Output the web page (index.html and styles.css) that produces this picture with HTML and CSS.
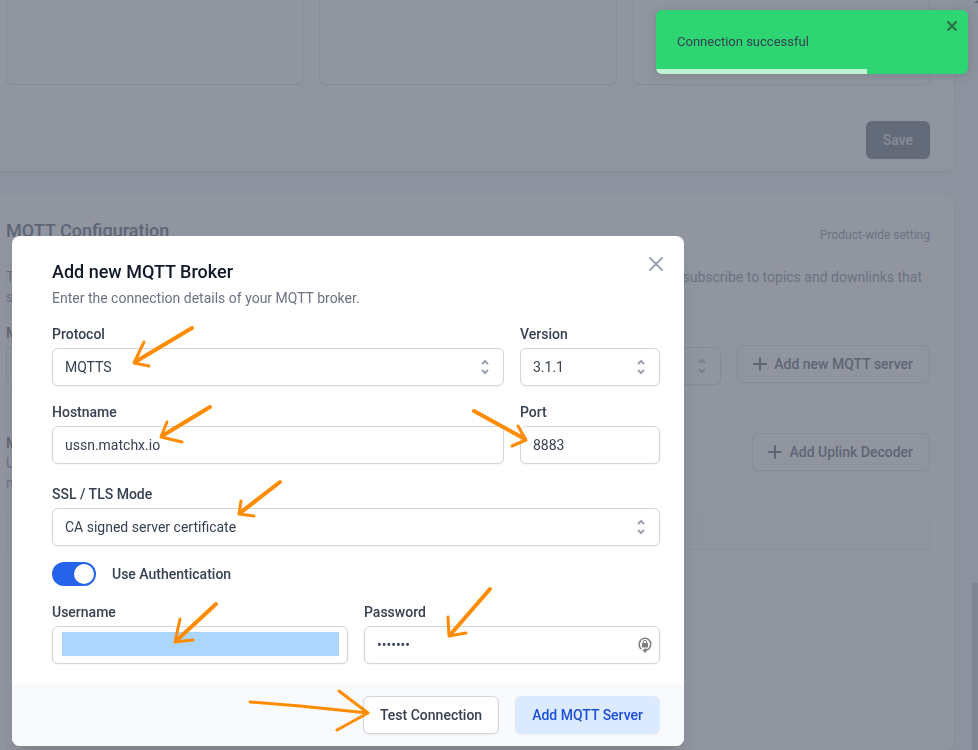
FILE: index.html
```html
<!DOCTYPE html>
<html lang="en">
<head>
  <meta charset="utf-8">
  <title>Add new MQTT Broker</title>
  <link rel="stylesheet" href="styles.css">
</head>
<body>
  <main class="page">
    <section class="card card-first">
      <div class="tiles">
        <div class="tile"></div>
        <div class="tile"></div>
        <div class="tile"></div>
      </div>
      <div class="card-footer">
        <button class="btn btn-save" type="button">Save</button>
      </div>
    </section>

    <section class="card card-config">
      <header class="config-head">
        <h2 class="heading">MQTT Configuration</h2>
        <span class="scope">Product-wide setting</span>
      </header>
      <div class="intro">
        <p>T<br>s</p>
        <p>subscribe to topics and downlinks that</p>
      </div>
      <div class="server-row">
        <div class="server-field">
          <label class="label" for="server">M</label>
          <div class="select-wrap">
            <select class="control" id="server"></select>
            <svg class="chevrons" viewBox="0 0 20 20"><path d="M7 7l3-3 3 3m0 6l-3 3-3-3"/></svg>
          </div>
        </div>
        <button class="btn btn-outline btn-icon" type="button">
          <svg class="plus" viewBox="0 0 20 20"><path d="M10 4v12M4 10h12"/></svg>
          Add new MQTT server
        </button>
      </div>
      <div class="decoder-row">
        <div class="decoder-text">
          <h3 class="label">M</h3>
          <p>U<br>n</p>
        </div>
        <button class="btn btn-outline btn-icon" type="button">
          <svg class="plus" viewBox="0 0 20 20"><path d="M10 4v12M4 10h12"/></svg>
          Add Uplink Decoder
        </button>
      </div>
      <div class="decoder-panel"><div class="decoder-panel-head"></div></div>
    </section>
  </main>

  <div class="scrollbar"><div class="scroll-arrow"></div><div class="scroll-thumb"></div></div>

  <div class="backdrop">
    <form class="modal" role="dialog" aria-labelledby="dialog-title">
      <div class="modal-body">
        <header class="modal-head">
          <div>
            <h1 class="modal-title" id="dialog-title">Add new MQTT Broker</h1>
            <p class="modal-sub">Enter the connection details of your MQTT broker.</p>
          </div>
          <button class="close" type="button" aria-label="Close">
            <svg viewBox="0 0 24 24"><path d="M6 18L18 6M6 6l12 12"/></svg>
          </button>
        </header>

        <div class="fields">
          <div class="field wide">
            <label class="label" for="protocol">Protocol</label>
            <div class="select-wrap">
              <select class="control" id="protocol"><option>MQTTS</option></select>
              <svg class="chevrons" viewBox="0 0 20 20"><path d="M7 7l3-3 3 3m0 6l-3 3-3-3"/></svg>
            </div>
          </div>
          <div class="field">
            <label class="label" for="version">Version</label>
            <div class="select-wrap">
              <select class="control" id="version"><option>3.1.1</option></select>
              <svg class="chevrons" viewBox="0 0 20 20"><path d="M7 7l3-3 3 3m0 6l-3 3-3-3"/></svg>
            </div>
          </div>
          <div class="field wide">
            <label class="label" for="hostname">Hostname</label>
            <input class="control" id="hostname" type="text" value="ussn.matchx.io">
          </div>
          <div class="field">
            <label class="label" for="port">Port</label>
            <input class="control" id="port" type="text" value="8883">
          </div>
        </div>

        <div class="field tls">
          <label class="label" for="tls">SSL / TLS Mode</label>
          <div class="select-wrap">
            <select class="control" id="tls"><option>CA signed server certificate</option></select>
            <svg class="chevrons" viewBox="0 0 20 20"><path d="M7 7l3-3 3 3m0 6l-3 3-3-3"/></svg>
          </div>
        </div>

        <div class="auth">
          <input class="toggle" id="auth" type="checkbox" role="switch" checked>
          <label class="auth-label" for="auth">Use Authentication</label>
        </div>

        <div class="fields credentials">
          <div class="field half">
            <label class="label" for="username">Username</label>
            <input class="control masked" id="username" type="text">
          </div>
          <div class="field half">
            <label class="label" for="password">Password</label>
            <div class="select-wrap">
              <input class="control" id="password" type="password" value="1234567">
              <svg class="lock" viewBox="0 0 16 18">
                <path class="ring" d="M4.300 13.200A5.800 6.200 0 1 1 12 12.800L8.500 14.500"/>
                <path d="M9.200 11.800v5.400L5.200 14.500z"/>
                <rect x="5" y="7" width="6" height="4.500" rx=".5"/>
                <path class="shackle" d="M6.300 7.500V6a1.700 1.700 0 0 1 3.400 0v1.500"/>
              </svg>
            </div>
          </div>
        </div>
      </div>
      <footer class="modal-footer">
        <button class="btn btn-outline" type="button">Test Connection</button>
        <button class="btn btn-primary" type="submit">Add MQTT Server</button>
      </footer>
    </form>
  </div>

  <div class="toast" role="status">
    <p>Connection successful</p>
    <button class="toast-close" type="button" aria-label="Dismiss">
      <svg viewBox="0 0 14 16"><path d="M2.500 3.500l9 9M11.500 3.500l-9 9"/></svg>
    </button>
    <div class="toast-progress"></div>
  </div>

  <svg class="arrows" width="978" height="750" viewBox="0 0 978 750" aria-hidden="true">
    <g class="shafts">
      <path d="M192 328L135 362"/>
      <path d="M210 407L162 436"/>
      <path d="M474 411L525 439"/>
      <path d="M280 482L240 513"/>
      <path d="M216 604L176 641"/>
      <path d="M490 589L450 635"/>
    </g>
    <path d="M144 342L134 363L149 366"/>
    <path d="M167 422L161 437L182 442"/>
    <path d="M518 426L526 440L512 446"/>
    <path d="M241 501L239 514L254 516"/>
    <path d="M180 619L175 642L193 640"/>
    <path d="M448 617L449 636L466 633"/>
    <path d="M250 702L300 706L368 713M339 691L368 713L337 730"/>
  </svg>
</body>
</html>
```
FILE: styles.css
```css
*, *::before, *::after { box-sizing: border-box; }

body {
  margin: 0;
  height: 100vh;
  overflow: hidden;
  display: flex;
  background: #f3f4f6;
  color: #374151;
  font: 14px/20px Roboto, "Liberation Sans", sans-serif;
}

h1, h2, h3, p { margin: 0; font-weight: 400; }
button, input, select { font: inherit; color: inherit; }
svg { fill: none; stroke: currentColor; display: block; }

.page {
  flex: 1;
  display: flex;
  flex-direction: column;
  gap: 24px;
  padding-right: 24px;
}

.card {
  background: #fff;
  border-radius: 0 8px 8px 0;
  box-shadow: 0 1px 3px rgba(0, 0, 0, .1), 0 1px 2px rgba(0, 0, 0, .06);
}

.tiles {
  display: grid;
  grid-template-columns: repeat(3, 1fr);
  gap: 16px;
  padding: 0 24px 24px 6px;
}

.tile {
  height: 85px;
  border: 1px solid #d1d5db;
  border-top: 0;
  border-radius: 0 0 6px 6px;
}

.card-footer {
  display: flex;
  justify-content: flex-end;
  padding: 12px 24px;
  background: #f9fafb;
  border-radius: 0 0 8px;
}

.btn {
  display: flex;
  align-items: center;
  justify-content: center;
  height: 38px;
  padding: 0 16px;
  border: 1px solid transparent;
  border-radius: 6px;
  font-weight: 500;
  white-space: nowrap;
  box-shadow: 0 1px 2px rgba(0, 0, 0, .05);
}

.btn-save { background: #4b5563; color: #d1d5db; }
.btn-outline { background: #fff; border-color: #d1d5db; }
.btn-primary { background: #dbeafe; color: #1d4ed8; }
.btn-icon { gap: 4px; padding-left: 12px; }
.plus { width: 20px; height: 20px; stroke-width: 2; stroke-linecap: round; }

.card-config {
  flex: 1;
  display: flex;
  flex-direction: column;
  padding: 24px 24px 0 6px;
  color: #6b7280;
}

.config-head { display: flex; justify-content: space-between; align-items: flex-end; }
.heading { font-size: 18px; line-height: 24px; font-weight: 500; color: #374151; }
.scope { font-size: 12px; line-height: 16px; }
.intro { display: flex; justify-content: space-between; margin-top: 24px; padding-right: 8px; }
.server-row { display: flex; align-items: flex-end; gap: 16px; margin-top: 16px; }
.server-field { flex: 1; }
.server-row .btn { margin-bottom: 2px; }
.decoder-row { display: flex; justify-content: space-between; align-items: flex-start; margin-top: 48px; }
.card-config .btn { color: #374151; }
.decoder-text .label { margin: 0; }

.decoder-panel {
  flex: 1;
  margin-top: 16px;
  border: 1px solid #f3f4f6;
  border-bottom: 0;
  border-radius: 8px 8px 0 0;
}

.decoder-panel-head { height: 40px; background: #f9fafb; border-bottom: 1px solid #e5e7eb; }

.label {
  display: block;
  margin-bottom: 4px;
  font-size: 14px;
  font-weight: 500;
  color: #374151;
}

.control {
  display: block;
  width: 100%;
  height: 38px;
  padding: 0 12px;
  border: 1px solid #d1d5db;
  border-radius: 6px;
  background-color: #fff;
  box-shadow: 0 1px 2px rgba(0, 0, 0, .05);
  appearance: none;
  outline: 0;
}

.select-wrap { position: relative; }

.chevrons {
  position: absolute;
  top: 9px;
  right: 9px;
  width: 20px;
  height: 20px;
  color: #9ca3af;
  stroke-width: 2;
  pointer-events: none;
}

.scrollbar {
  position: fixed;
  inset: 0 0 0 auto;
  width: 6px;
  display: flex;
  flex-direction: column;
  justify-content: space-between;
}

.scroll-arrow { align-self: flex-end; border-left: 4px solid transparent; border-bottom: 3px solid #374151; }
.scroll-thumb { height: 167px; background: #bfc1c4; }

.backdrop {
  position: fixed;
  inset: 0;
  display: flex;
  align-items: flex-end;
  padding: 0 12px 4px;
  background: rgba(107, 114, 128, .75);
}

.modal {
  width: 100%;
  max-width: 672px;
  overflow: hidden;
  border-radius: 8px;
  background: #fff;
  box-shadow: 0 20px 25px -5px rgba(0, 0, 0, .1), 0 10px 10px -5px rgba(0, 0, 0, .04);
}

.modal-body { padding: 24px 24px 20px 40px; }
.modal-head { display: flex; justify-content: space-between; align-items: flex-start; }
.modal-title { font-size: 18px; line-height: 24px; font-weight: 500; color: #111827; }
.modal-sub { margin-top: 4px; color: #6b7280; }

.close {
  width: 24px;
  height: 24px;
  margin: -8px -8px 0 0;
  padding: 0;
  border: 0;
  background: none;
  color: #9ca3af;
}

.close svg { width: 24px; height: 24px; stroke-width: 2; stroke-linecap: round; }

.fields {
  display: grid;
  grid-template-columns: repeat(4, 1fr);
  gap: 16px;
  margin-top: 16px;
}

.wide { grid-column: span 3; }
.half { grid-column: span 2; }
.tls { margin-top: 20px; }
.auth { display: flex; align-items: center; gap: 16px; margin-top: 16px; }
.auth-label { font-weight: 500; }

.toggle {
  width: 44px;
  height: 24px;
  margin: 0;
  padding: 2px;
  border-radius: 12px;
  background: #2563eb;
  appearance: none;
}

.toggle::before {
  content: "";
  display: block;
  width: 20px;
  height: 20px;
  margin-left: auto;
  border-radius: 50%;
  background: #fff;
}

.masked {
  padding: 5px 8px 7px 9px;
  background-color: #add6ff;
  background-clip: content-box;
}

.lock {
  position: absolute;
  top: 10px;
  right: 7px;
  width: 16px;
  height: 18px;
  fill: #808080;
  stroke: none;
}

.ring, .shackle { fill: none; stroke: #808080; }
.ring { stroke-width: 1.5; }

.modal-footer {
  display: flex;
  justify-content: flex-end;
  gap: 16px;
  padding: 12px 24px;
  background: #f9fafb;
}

.toast {
  position: fixed;
  top: 10px;
  right: 10px;
  width: 312px;
  height: 64px;
  padding: 22px 21px;
  overflow: hidden;
  border-radius: 6px;
  background: #2ed573;
  box-shadow: 0 1px 10px rgba(0, 0, 0, .1), 0 2px 15px rgba(0, 0, 0, .05);
  font-size: 13px;
}

.toast-close {
  position: absolute;
  top: 8px;
  right: 9px;
  padding: 0;
  border: 0;
  background: none;
  color: #2a6d49;
}

.toast-close svg { width: 14px; height: 16px; stroke-width: 2; }

.toast-progress {
  position: absolute;
  left: 0;
  bottom: 0;
  width: 211px;
  height: 5px;
  background: rgba(255, 255, 255, .7);
}

.arrows {
  position: absolute;
  top: 0;
  left: 0;
  stroke: #ff8c00;
  stroke-width: 3;
  stroke-linecap: round;
  stroke-linejoin: round;
  pointer-events: none;
}

.shafts { stroke-width: 4; }
```
